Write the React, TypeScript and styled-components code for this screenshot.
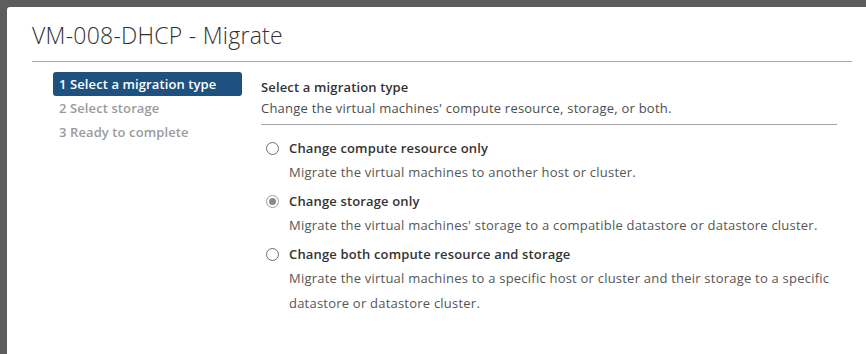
import React from "react";
import styled, { createGlobalStyle } from "styled-components";

const Global = createGlobalStyle`
  html, body { margin: 0; padding: 0; }
  body {
    width: 866px; height: 354px; overflow: hidden;
    background: #5d5d5d;
    font-family: "Open Sans", "Liberation Sans", sans-serif;
  }
`;

const Backdrop = styled.div`
  display: flex;
  height: 354px;
  padding: 7px 0 0 7px;
  box-sizing: border-box;
`;

const Modal = styled.div`
  flex: 1;
  background: #fff;
  border-radius: 3px 0 0 0;
  padding: 0 14px 0 25px;
  display: flex;
  flex-direction: column;
`;

const Header = styled.div`
  height: 55px;
  border-bottom: 1px solid #a6a6a6;
  display: flex;
  align-items: center;
  padding-top: 2px;
  box-sizing: border-box;
`;

const Title = styled.h1`
  margin: 0;
  font-weight: 300;
  font-size: 23px;
  color: #313131;
  letter-spacing: 0.25px;
`;

const Body = styled.div`
  display: grid;
  grid-template-columns: 189px 576px;
  column-gap: 19px;
  padding: 10px 0 0 21px;
`;

const Nav = styled.div`
  display: flex;
  flex-direction: column;
`;

const Step = styled.div<{ $active?: boolean }>`
  height: 24px;
  display: flex;
  align-items: center;
  padding-left: 6px;
  border-radius: 3px;
  font-size: 13px;
  font-weight: 600;
  letter-spacing: 0.1px;
  color: ${(p) => (p.$active ? "#fff" : "#9b9b9b")};
  background: ${(p) => (p.$active ? "#1e5180" : "transparent")};
`;

const Content = styled.div`
  display: flex;
  flex-direction: column;
`;

const SectionHead = styled.div`
  border-bottom: 1px solid #a6a6a6;
  padding-bottom: 6px;
`;

const Heading = styled.div`
  font-size: 13px;
  font-weight: 600;
  color: #333;
  line-height: 20px;
  margin-top: 5px;
  letter-spacing: 0.15px;
`;

const Sub = styled.div`
  font-size: 13px;
  color: #4d4d4d;
  line-height: 20px;
  margin-top: 1px;
  letter-spacing: 0.22px;
`;

const Options = styled.div`
  display: flex;
  flex-direction: column;
  padding-top: 11px;
`;

const Option = styled.div`
  display: grid;
  grid-template-columns: 28px 1fr;
  margin-bottom: 4px;
`;

const RadioCell = styled.div`
  height: 24px;
  display: flex;
  align-items: center;
  padding-left: 5px;
`;

const Radio = styled.span<{ $checked?: boolean }>`
  width: 13px;
  height: 13px;
  box-sizing: border-box;
  border-radius: 50%;
  border: 1px solid ${(p) => (p.$checked ? "#9a9a9a" : "#6f6f6f")};
  display: flex;
  align-items: center;
  justify-content: center;
  &::after {
    content: "";
    display: ${(p) => (p.$checked ? "block" : "none")};
    width: 7px;
    height: 7px;
    border-radius: 50%;
    background: #8a8a8a;
  }
`;

const Label = styled.div`
  font-size: 13px;
  font-weight: 600;
  color: #333;
  line-height: 24px;
  letter-spacing: 0.15px;
`;

const Desc = styled.div`
  font-size: 13px;
  color: #565656;
  line-height: 25px;
  letter-spacing: 0.22px;
`;

const options = [
  {
    label: "Change compute resource only",
    desc: "Migrate the virtual machines to another host or cluster.",
    checked: false,
  },
  {
    label: "Change storage only",
    desc: "Migrate the virtual machines' storage to a compatible datastore or datastore cluster.",
    checked: true,
  },
  {
    label: "Change both compute resource and storage",
    desc: "Migrate the virtual machines to a specific host or cluster and their storage to a specific datastore or datastore cluster.",
    checked: false,
  },
];

export default function App() {
  return (
    <>
      <Global />
      <Backdrop>
        <Modal>
          <Header>
            <Title>VM-008-DHCP - Migrate</Title>
          </Header>
          <Body>
            <Nav>
              <Step $active>1 Select a migration type</Step>
              <Step>2 Select storage</Step>
              <Step>3 Ready to complete</Step>
            </Nav>
            <Content>
              <SectionHead>
                <Heading>Select a migration type</Heading>
                <Sub>Change the virtual machines' compute resource, storage, or both.</Sub>
              </SectionHead>
              <Options>
                {options.map((o) => (
                  <Option key={o.label}>
                    <RadioCell>
                      <Radio $checked={o.checked} />
                    </RadioCell>
                    <Label>{o.label}</Label>
                    <span />
                    <Desc>{o.desc}</Desc>
                  </Option>
                ))}
              </Options>
            </Content>
          </Body>
        </Modal>
      </Backdrop>
    </>
  );
}
